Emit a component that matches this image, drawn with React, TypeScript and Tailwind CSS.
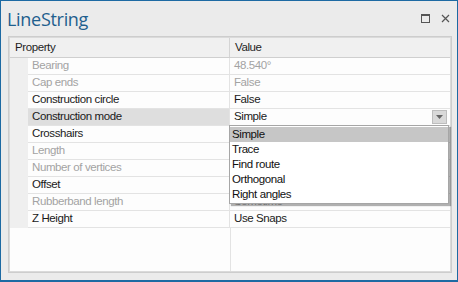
import { Fragment } from "react";

type Row = { name: string; value: string; enabled: boolean };

const rows: Row[] = [
  { name: "Bearing", value: "48.540°", enabled: false },
  { name: "Cap ends", value: "False", enabled: false },
  { name: "Construction circle", value: "False", enabled: true },
  { name: "Construction mode", value: "Simple", enabled: true },
  { name: "Crosshairs", value: "", enabled: true },
  { name: "Length", value: "", enabled: false },
  { name: "Number of vertices", value: "", enabled: false },
  { name: "Offset", value: "", enabled: true },
  { name: "Rubberband length", value: "Sometime", enabled: false },
  { name: "Z Height", value: "Use Snaps", enabled: true },
];

const options = ["Simple", "Trace", "Find route", "Orthogonal", "Right angles"];

const App = () => {
  return (
    <div
      className="w-[458px] h-[282px] border border-[#1d6aa3] border-b-2 bg-[#ebebeb] flex flex-col"
      style={{ fontFamily: '"Liberation Sans", Arial, sans-serif' }}
    >
      <div className="h-[35px] shrink-0 flex items-start justify-between pl-[6px] pr-[7px]">
        <div
          className="text-[18px] leading-none text-[#1f5f8e] mt-[9px] tracking-[-0.3px]"
          style={{ fontFamily: '"Open Sans", "Noto Sans", sans-serif' }}
        >
          LineString
        </div>
        <div className="flex items-center gap-[11px] mt-[13px]">
          <div className="w-[9px] h-[9px] border border-[#555] border-t-2" />
          <svg width="9" height="9" viewBox="0 0 9 9">
            <path d="M1 1L8 8M8 1L1 8" stroke="#555" strokeWidth="1.2" />
          </svg>
        </div>
      </div>

      <div className="ml-[7px] mr-[5px] mb-[7px] flex-1 border border-[#cdcdcd] bg-white">
        <div className="relative h-full border border-[#dadada] bg-[#fdfdfd] text-[11.5px] tracking-[-0.4px] leading-none">
          {/* header */}
          <div className="grid grid-cols-[220px_1fr] h-[20px] bg-[#f0f0f0] border-b border-[#cfcfcf] text-[#1e1e1e]">
            <div className="border-r border-[#d4d4d4] pl-[5px] flex items-center">Property</div>
            <div className="pl-[5px] flex items-center">Value</div>
          </div>

          {/* rows */}
          <div className="grid grid-cols-[18px_202px_1fr]">
            {rows.map((r) => {
              const color = r.enabled ? "text-[#1a1a1a]" : "text-[#a3a3a3]";
              const active = r.name === "Construction mode";
              return (
                <Fragment key={r.name}>
                  <div className="bg-[#efefef] h-[17px]" />
                  <div
                    className={`h-[17px] border-b border-r border-[#e3e3e3] pl-[4px] flex items-center ${color} ${
                      active ? "bg-[#dedede]" : ""
                    }`}
                  >
                    {r.name}
                  </div>
                  <div className={`h-[17px] border-b border-[#e3e3e3] pl-[4px] pr-[3px] flex items-center justify-between ${color}`}>
                    <span>{r.value}</span>
                    {active && (
                      <div className="w-[15px] h-[14px] bg-[#d9d9d9] border border-[#bdbdbd] flex items-center justify-center">
                        <svg width="7" height="4" viewBox="0 0 7 4">
                          <path d="M0 0H7L3.5 4Z" fill="#666" />
                        </svg>
                      </div>
                    )}
                  </div>
                </Fragment>
              );
            })}
          </div>
          <div className="absolute left-[220px] top-[190px] bottom-0 border-l border-[#e3e3e3]" />

          {/* open dropdown */}
          <div className="absolute left-[219px] top-[87px] w-[220px] bg-white border border-[#a6a6a6] shadow-[2px_2px_1px_rgba(0,0,0,0.3)] py-px">
            {options.map((o, i) => (
              <div
                key={o}
                className={`h-[15px] pl-[2px] flex items-center text-[#111] ${i === 0 ? "bg-[#c6c6c6]" : ""}`}
              >
                {o}
              </div>
            ))}
          </div>
        </div>
      </div>
    </div>
  );
};

export default App;
